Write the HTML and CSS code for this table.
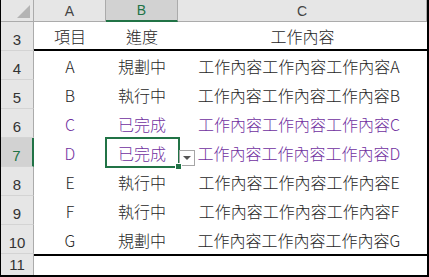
FILE: index.html
```html
<!DOCTYPE html>
<html lang="zh-Hant">
<head>
  <meta charset="UTF-8">
  <title>工作進度表</title>
  <link rel="stylesheet" href="styles.css">
</head>
<body>
  <div class="sheet">
    <!-- 欄標題 -->
    <div class="corner"><span class="corner-mark"></span></div>
    <div class="col-head">A</div>
    <div class="col-head active">B</div>
    <div class="col-head">C</div>

    <!-- 第3列: 表頭 -->
    <div class="row-head">3</div>
    <div class="cell head-row">項目</div>
    <div class="cell head-row">進度</div>
    <div class="cell head-row">工作內容</div>

    <div class="row-head">4</div>
    <div class="cell">A</div>
    <div class="cell">規劃中</div>
    <div class="cell desc">工作內容工作內容工作內容A</div>

    <div class="row-head">5</div>
    <div class="cell">B</div>
    <div class="cell">執行中</div>
    <div class="cell desc">工作內容工作內容工作內容B</div>

    <div class="row-head">6</div>
    <div class="cell done">C</div>
    <div class="cell done">已完成</div>
    <div class="cell desc done">工作內容工作內容工作內容C</div>

    <div class="row-head active">7</div>
    <div class="cell done">D</div>
    <div class="cell done selected">已完成<span class="dropdown"><span class="arrow"></span></span></div>
    <div class="cell desc done">工作內容工作內容工作內容D</div>

    <div class="row-head">8</div>
    <div class="cell">E</div>
    <div class="cell">執行中</div>
    <div class="cell desc">工作內容工作內容工作內容E</div>

    <div class="row-head">9</div>
    <div class="cell">F</div>
    <div class="cell">執行中</div>
    <div class="cell desc">工作內容工作內容工作內容F</div>

    <div class="row-head">10</div>
    <div class="cell">G</div>
    <div class="cell">規劃中</div>
    <div class="cell desc">工作內容工作內容工作內容G</div>

    <div class="row-head last">11</div>
    <div class="cell foot-row"></div>
    <div class="cell foot-row"></div>
    <div class="cell foot-row"></div>
  </div>
</body>
</html>
```

FILE: styles.css
```css
html, body {
  margin: 0;
  padding: 0;
  background: #fff;
}
.sheet {
  box-sizing: border-box;
  width: 429px;
  height: 277px;
  display: grid;
  grid-template-columns: 33px 72px 72px 1fr;
  grid-template-rows: 22px repeat(8, 29px) 1fr;
  border-left: 1px solid #000;
  border-right: 2px solid #000;
  border-bottom: 2px solid #000;
  font-family: "Noto Sans CJK TC", "Liberation Sans", sans-serif;
  color: #262626;
  overflow: hidden;
}
.corner {
  position: relative;
  background: #e6e6e6;
  border-right: 1px solid #ababab;
  border-bottom: 1px solid #ababab;
}
.corner-mark {
  position: absolute;
  right: 3px;
  bottom: 3px;
  width: 0;
  height: 0;
  border-left: 13px solid transparent;
  border-bottom: 13px solid #b4b4b4;
}
.col-head {
  display: flex;
  align-items: center;
  justify-content: center;
  background: #e6e6e6;
  border-right: 1px solid #ababab;
  border-bottom: 1px solid #ababab;
  font-family: "Liberation Sans", sans-serif;
  font-size: 14px;
  color: #444;
}
.col-head:last-of-type {
  border-right: none;
}
.col-head.active {
  background: #d2d2d2;
  border-bottom: 2px solid #217346;
  color: #217346;
}
.row-head {
  display: flex;
  align-items: flex-end;
  justify-content: center;
  padding-bottom: 2px;
  box-sizing: border-box;
  background: #e6e6e6;
  border-right: 1px solid #ababab;
  border-bottom: 1px solid #d4d4d4;
  font-family: "Liberation Sans", sans-serif;
  font-size: 15px;
  color: #333;
}
.row-head.active {
  background: #d2d2d2;
  border-right: 2px solid #217346;
  color: #217346;
}
.row-head.last {
  border-bottom: none;
}
.cell {
  display: flex;
  align-items: center;
  justify-content: center;
  font-size: 16px;
  font-weight: 300;
  white-space: nowrap;
}
.desc {
  padding-right: 7px;
}
.head-row {
  border-bottom: 2px solid #000;
}
.foot-row {
  border-top: 2px solid #000;
}
.done {
  color: #7030a0;
}
.selected {
  position: relative;
}
/* 作用中儲存格的框線與填滿控點 */
.selected::after {
  content: "";
  position: absolute;
  left: -1px;
  top: -1px;
  right: -2px;
  bottom: -1px;
  border: 2px solid #217346;
}
.selected::before {
  content: "";
  position: absolute;
  right: -4px;
  bottom: -3px;
  width: 5px;
  height: 5px;
  background: #217346;
  border: 1px solid #fff;
  z-index: 2;
}
.dropdown {
  position: absolute;
  left: 100%;
  top: 12px;
  margin-left: 1px;
  box-sizing: border-box;
  width: 16px;
  height: 16px;
  background: #fff;
  border: 1px solid #a6a6a6;
  display: flex;
  align-items: center;
  justify-content: center;
  z-index: 1;
}
.arrow {
  width: 0;
  height: 0;
  border-left: 4px solid transparent;
  border-right: 4px solid transparent;
  border-top: 4px solid #555;
}
```
